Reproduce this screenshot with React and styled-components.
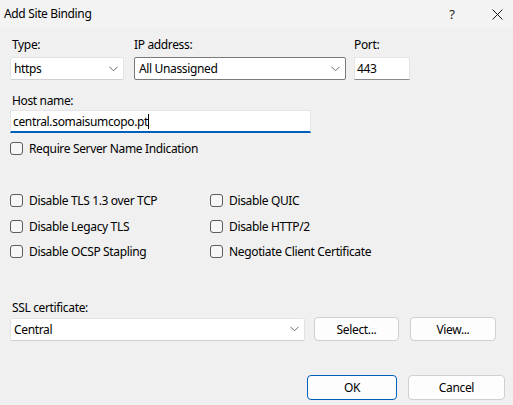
import React from 'react';
import styled, { createGlobalStyle } from 'styled-components';

const GlobalStyle = createGlobalStyle`
  html, body {
    margin: 0;
    padding: 0;
    background: #f0f0f0;
  }
  body {
    font-family: "Noto Sans", "Open Sans", sans-serif;
    font-size: 12px;
    letter-spacing: -0.35px;
    color: #000;
  }
`;

const Dialog = styled.div`
  width: 513px;
  height: 405px;
  background: #f0f0f0;
  display: flex;
  flex-direction: column;
  overflow: hidden;
`;

const TitleBar = styled.div`
  height: 28px;
  background: #f3f3f3;
  display: flex;
  align-items: center;
  padding-left: 4px;
  flex-shrink: 0;
`;

const Title = styled.span`
  flex: 1;
  font-size: 12px;
  padding-bottom: 2px;
`;

const TitleButton = styled.span`
  width: 32px;
  margin-left: ${p => p.$ml || 0}px;
  font-size: 13px;
  color: #1a1a1a;
  display: flex;
  justify-content: center;
  align-items: center;
`;

const Body = styled.div`
  padding: 9px 0 0 10px;
  display: flex;
  flex-direction: column;
`;

const TopRow = styled.div`
  display: grid;
  grid-template-columns: 114px 212px 56px;
  column-gap: 10px;
  & > div:last-child {
    margin-left: -2px;
  }
`;

const Field = styled.div`
  display: flex;
  flex-direction: column;
`;

const Label = styled.label`
  line-height: 15px;
  height: 15px;
  margin: 0 0 ${p => (p.$gap !== undefined ? p.$gap : 5)}px ${p => (p.$ml !== undefined ? p.$ml : 2)}px;
`;

const Combo = styled.div`
  height: 23px;
  box-sizing: border-box;
  background: #fff;
  border: 1px solid ${p => (p.$dark ? '#7a7a7a' : '#e3e3e3')};
  border-bottom-color: ${p => (p.$dark ? '#7a7a7a' : '#cfcfcf')};
  border-radius: 2px;
  display: flex;
  align-items: center;
  padding: 0 5px 0 ${p => (p.$dark ? '4px' : '3px')};
`;

const ComboText = styled.span`
  flex: 1;
  white-space: nowrap;
`;

const TextBox = styled.div`
  height: 23px;
  box-sizing: border-box;
  background: #fff;
  border: 1px solid #e5e5e5;
  border-bottom: ${p => (p.$focus ? '2px solid #005fb8' : '1px solid #8a8a8a')};
  display: flex;
  align-items: center;
  padding: 0 2px;
  width: ${p => p.$width}px;
`;

const Caret = styled.span`
  display: inline-block;
  width: 1px;
  height: 15px;
  background: #000;
`;

const Chevron = () => (
  <svg width="9" height="6" viewBox="0 0 9 6">
    <path d="M0.5 0.8 L4.5 4.8 L8.5 0.8" fill="none" stroke="#6a6a6a" strokeWidth="1" />
  </svg>
);

const HostSection = styled.div`
  margin-top: 13px;
  display: flex;
  flex-direction: column;
`;

const CheckRow = styled.label`
  display: flex;
  align-items: center;
  height: 15px;
  gap: 6px;
`;

const Box = styled.span`
  width: 13px;
  height: 13px;
  box-sizing: border-box;
  border: 1px solid #5c5c5c;
  border-radius: 3px;
  background: #f7f7f7;
  flex-shrink: 0;
`;

const Sni = styled.div`
  margin-top: 8px;
`;

const OptionsGrid = styled.div`
  margin-top: 37px;
  display: grid;
  grid-template-columns: 200px 200px;
  row-gap: 10.5px;
`;

const CertSection = styled.div`
  margin-top: 41px;
  display: flex;
  flex-direction: column;
`;

const CertRow = styled.div`
  display: flex;
  align-items: center;
  gap: 9px;
  & > div:first-child {
    width: 295px;
  }
`;

const Button = styled.button`
  font-family: inherit;
  font-size: 12px;
  letter-spacing: inherit;
  color: #000;
  height: ${p => p.$h || 24}px;
  width: ${p => p.$w}px;
  box-sizing: border-box;
  background: #fdfdfd;
  border: 1px solid ${p => (p.$primary ? '#005fb8' : '#d0d0d0')};
  border-radius: 4px;
  padding: 0;
  margin-left: ${p => p.$ml || 0}px;
`;

const Footer = styled.div`
  margin-top: 34px;
  display: flex;
  justify-content: flex-end;
  gap: 11px;
  padding-right: 8px;
`;

const Check = ({ children }) => (
  <CheckRow>
    <Box />
    <span>{children}</span>
  </CheckRow>
);

export default function App() {
  return (
    <Dialog>
      <GlobalStyle />
      <TitleBar>
        <Title>Add Site Binding</Title>
        <TitleButton>?</TitleButton>
        <TitleButton $ml={13}>
          <svg width="11" height="11" viewBox="0 0 11 11">
            <path d="M0.5 0.5 L10.5 10.5 M10.5 0.5 L0.5 10.5" stroke="#1a1a1a" strokeWidth="1" />
          </svg>
        </TitleButton>
      </TitleBar>
      <Body>
        <TopRow>
          <Field>
            <Label>Type:</Label>
            <Combo>
              <ComboText>https</ComboText>
              <Chevron />
            </Combo>
          </Field>
          <Field>
            <Label $ml={0}>IP address:</Label>
            <Combo $dark>
              <ComboText>All Unassigned</ComboText>
              <Chevron />
            </Combo>
          </Field>
          <Field>
            <Label $ml={0}>Port:</Label>
            <TextBox $width={56}>443</TextBox>
          </Field>
        </TopRow>
        <HostSection>
          <Label $gap={2}>Host name:</Label>
          <TextBox $focus $width={301}>
            <span>central.somaisumcopo.pt</span>
            <Caret />
          </TextBox>
        </HostSection>
        <Sni>
          <Check>Require Server Name Indication</Check>
        </Sni>
        <OptionsGrid>
          <Check>Disable TLS 1.3 over TCP</Check>
          <Check>Disable QUIC</Check>
          <Check>Disable Legacy TLS</Check>
          <Check>Disable HTTP/2</Check>
          <Check>Disable OCSP Stapling</Check>
          <Check>Negotiate Client Certificate</Check>
        </OptionsGrid>
        <CertSection>
          <Label $gap={2}>SSL certificate:</Label>
          <CertRow>
            <Combo>
              <ComboText>Central</ComboText>
              <Chevron />
            </Combo>
            <Button $w={85}>Select...</Button>
            <Button $w={86} $ml={2}>View...</Button>
          </CertRow>
        </CertSection>
        <Footer>
          <Button $primary $w={90} $h={25}>OK</Button>
          <Button $w={97} $h={25}>Cancel</Button>
        </Footer>
      </Body>
    </Dialog>
  );
}
